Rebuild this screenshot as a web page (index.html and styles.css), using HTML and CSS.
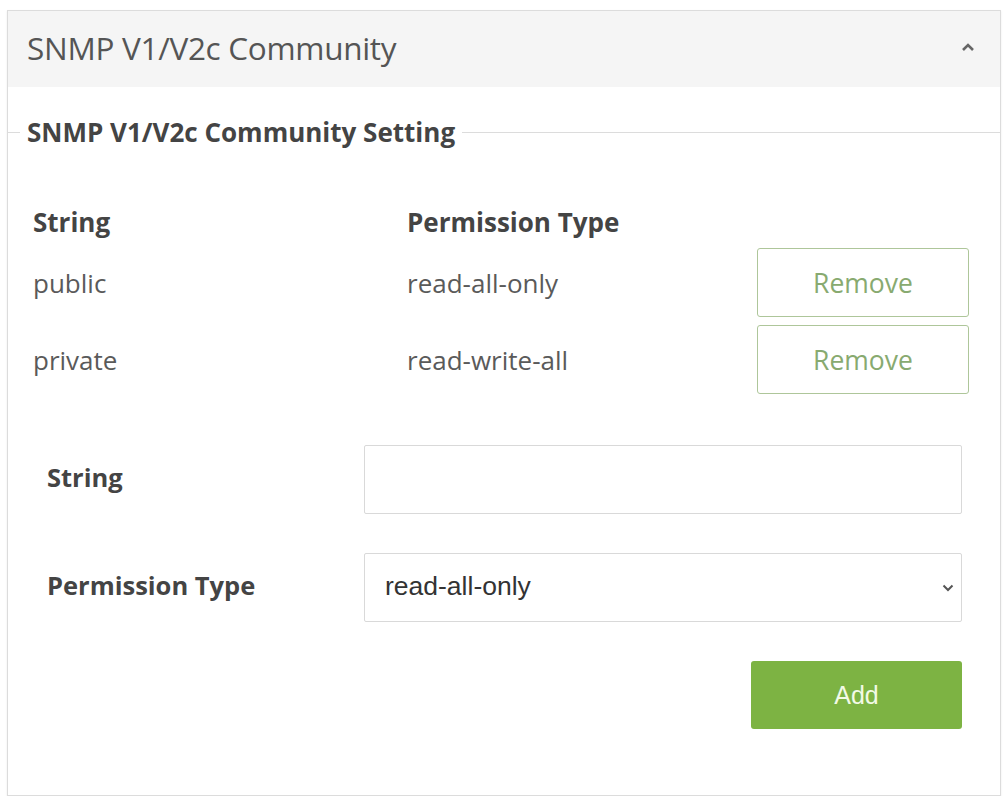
FILE: index.html
```html
<!DOCTYPE html>
<html>
<head>
<meta charset="utf-8">
<link rel="stylesheet" href="styles.css">
</head>
<body>
<div class="panel">
  <div class="panel-head">
    <span class="panel-title">SNMP V1/V2c Community</span>
    <svg class="caret" width="14" height="10" viewBox="0 0 14 10"><path d="M2 8 L7 3 L12 8" fill="none" stroke="#666" stroke-width="2.6"/></svg>
  </div>
  <div class="panel-body">
    <fieldset class="setting">
      <legend class="legend">SNMP V1/V2c Community Setting</legend>
      <div class="list">
        <div class="list-head">
          <span>String</span>
          <span>Permission Type</span>
        </div>
        <div class="list-row">
          <span>public</span>
          <span>read-all-only</span>
          <button class="btn-remove">Remove</button>
        </div>
        <div class="list-row">
          <span>private</span>
          <span>read-write-all</span>
          <button class="btn-remove">Remove</button>
        </div>
      </div>
      <div class="form">
        <div class="form-row">
          <label class="form-label">String</label>
          <input class="form-input" type="text">
        </div>
        <div class="form-row">
          <label class="form-label">Permission Type</label>
          <div class="select-wrap">
            <select class="form-select">
              <option>read-all-only</option>
              <option>read-write-all</option>
            </select>
            <svg class="select-arrow" width="12" height="8" viewBox="0 0 12 8"><path d="M1.5 1.5 L6 6 L10.5 1.5" fill="none" stroke="#555" stroke-width="2"/></svg>
          </div>
        </div>
        <div class="form-actions">
          <button class="btn-add">Add</button>
        </div>
      </div>
    </fieldset>
  </div>
</div>
</body>
</html>
```

FILE: styles.css
```css
html, body {
  margin: 0;
  padding: 0;
  background: #ffffff;
}
body {
  font-family: "Open Sans", "Liberation Sans", sans-serif;
  color: #555;
}
.panel {
  margin: 10px 3px 0 7px;
  width: 992px;
  height: 784px;
  border: 1px solid #dcdcdc;
  box-shadow: 0 1px 2px rgba(0,0,0,0.08);
  display: flex;
  flex-direction: column;
}
.panel-head {
  height: 76px;
  background: #f5f5f5;
  display: flex;
  align-items: center;
  justify-content: space-between;
  padding: 0 25px 0 19px;
}
.panel-title {
  font-size: 31.5px;
  line-height: 40px;
  color: #555;
  letter-spacing: -0.3px;
  margin-top: -3px;
}
.caret {
  margin-top: -4px;
}
.panel-body {
  padding-top: 28px;
}
.setting {
  margin: 0;
  padding: 0;
  border: none;
  border-top: 1px solid #dcdcdc;
}
.legend {
  margin-left: 12px;
  padding: 0 7px;
  font-size: 26px;
  line-height: 34px;
  font-weight: 700;
  color: #444;
}
.list {
  margin-top: 56px;
  padding: 0 31px 0 25px;
  font-size: 26px;
}
.list-head {
  display: grid;
  grid-template-columns: 374px 1fr;
  line-height: 34px;
  font-weight: 700;
  color: #444;
}
.list-row {
  display: grid;
  grid-template-columns: 374px 1fr 212px;
  align-items: center;
  color: #5a5a5a;
}
.list-head + .list-row {
  margin-top: 9px;
}
.list-row + .list-row {
  margin-top: 8px;
}
.btn-remove {
  height: 69px;
  background: #fff;
  border: 1px solid #aec69a;
  border-radius: 3px;
  font-family: "Open Sans", sans-serif;
  font-size: 26.5px;
  color: #88aa70;
}
.form {
  margin-top: 51px;
  padding: 0 38px 0 39px;
}
.form-row {
  display: grid;
  grid-template-columns: 317px 1fr;
  align-items: center;
  margin-bottom: 39px;
}
.form-label {
  font-size: 25.5px;
  font-weight: 700;
  color: #444;
  padding-bottom: 5px;
}
.form-input, .form-select {
  box-sizing: border-box;
  width: 100%;
  height: 69px;
  border: 1px solid #d9d9d9;
  border-radius: 2px;
  background: #fff;
  margin: 0;
}
.select-wrap {
  position: relative;
}
.form-select {
  appearance: none;
  -webkit-appearance: none;
  padding: 0 40px 3px 20px;
  font-family: "Liberation Sans", Arial, sans-serif;
  font-size: 26.5px;
  color: #333;
}
.select-arrow {
  position: absolute;
  right: 8px;
  top: 31px;
}
.form-actions {
  display: flex;
  justify-content: flex-end;
  margin-top: 1px;
}
.btn-add {
  width: 211px;
  height: 68px;
  background: #7db343;
  border: none;
  border-radius: 3px;
  font-family: "Liberation Sans", Arial, sans-serif;
  font-size: 25px;
  color: #f2fae6;
}
```
